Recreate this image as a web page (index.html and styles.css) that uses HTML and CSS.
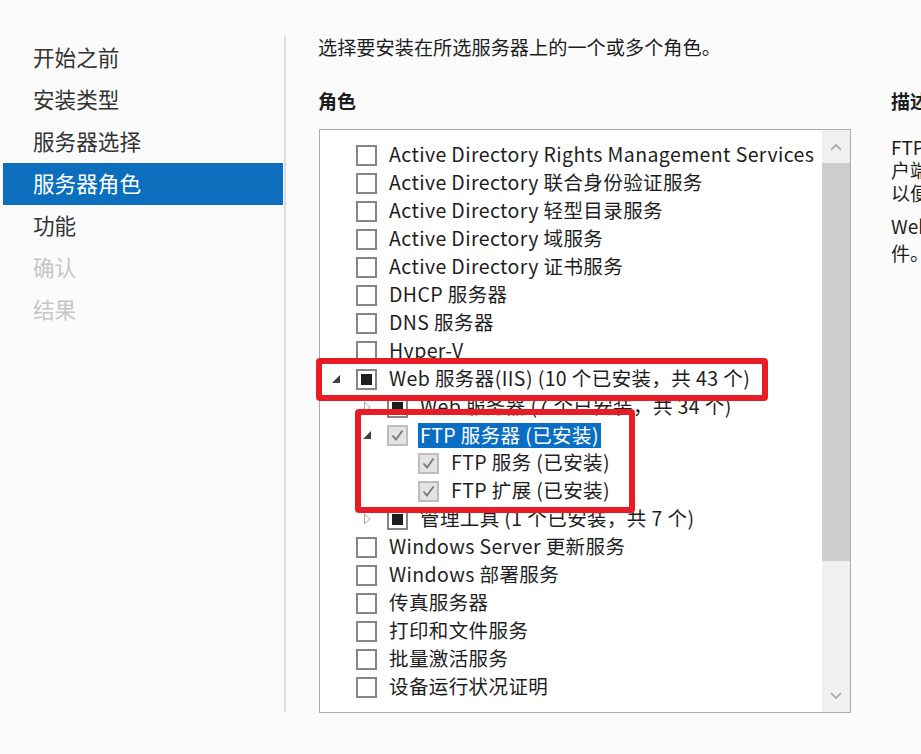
FILE: index.html
```html
<!DOCTYPE html>
<html lang="zh-CN">
<head>
<meta charset="UTF-8">
<meta name="viewport" content="width=device-width, initial-scale=1.0">
<title>添加角色和功能向导 - 服务器角色</title>
<link rel="stylesheet" href="styles.css">
</head>
<body>
<div class="window">
  <div class="wizard">
    <nav class="steps">
      <div class="step">开始之前</div>
      <div class="step">安装类型</div>
      <div class="step">服务器选择</div>
      <div class="step active">服务器角色</div>
      <div class="step">功能</div>
      <div class="step disabled">确认</div>
      <div class="step disabled">结果</div>
    </nav>
    <div class="divider"></div>

    <main class="content">
      <p class="intro">选择要安装在所选服务器上的一个或多个角色。</p>
      <div class="columns">
        <section class="roles">
          <h3>角色</h3>
          <div class="listbox">
            <ul class="tree">
              <li class="row lvl0"><span class="exp"></span><span class="cb"></span><span class="label">Active Directory Rights Management Services</span></li>
              <li class="row lvl0"><span class="exp"></span><span class="cb"></span><span class="label">Active Directory 联合身份验证服务</span></li>
              <li class="row lvl0"><span class="exp"></span><span class="cb"></span><span class="label">Active Directory 轻型目录服务</span></li>
              <li class="row lvl0"><span class="exp"></span><span class="cb"></span><span class="label">Active Directory 域服务</span></li>
              <li class="row lvl0"><span class="exp"></span><span class="cb"></span><span class="label">Active Directory 证书服务</span></li>
              <li class="row lvl0"><span class="exp"></span><span class="cb"></span><span class="label">DHCP 服务器</span></li>
              <li class="row lvl0"><span class="exp"></span><span class="cb"></span><span class="label">DNS 服务器</span></li>
              <li class="row lvl0"><span class="exp"></span><span class="cb"></span><span class="label">Hyper-V</span></li>
              <li class="row lvl0">
                <span class="exp"><svg width="10" height="10" viewBox="0 0 10 10"><polygon points="9,1 9,9 1,9" fill="#404040"/></svg></span>
                <span class="cb partial"></span><span class="label">Web 服务器(IIS) (10 个已安装，共 43 个)</span>
              </li>
              <li class="row lvl1">
                <span class="exp"><svg width="10" height="12" viewBox="0 0 10 12"><polygon points="2.5,1 8,6 2.5,11" fill="none" stroke="#a8a8a8"/></svg></span>
                <span class="cb partial"></span><span class="label">Web 服务器 (7 个已安装，共 34 个)</span>
              </li>
              <li class="row lvl1">
                <span class="exp"><svg width="10" height="10" viewBox="0 0 10 10"><polygon points="9,1 9,9 1,9" fill="#404040"/></svg></span>
                <span class="cb checked"><svg width="17" height="17" viewBox="0 0 17 17"><polyline points="3.5,8.5 7,12.5 13.5,3.5" fill="none" stroke="#777" stroke-width="1.8"/></svg></span>
                <span class="label selected">FTP 服务器 (已安装)</span>
              </li>
              <li class="row lvl2"><span class="exp"></span>
                <span class="cb checked"><svg width="17" height="17" viewBox="0 0 17 17"><polyline points="3.5,8.5 7,12.5 13.5,3.5" fill="none" stroke="#777" stroke-width="1.8"/></svg></span>
                <span class="label">FTP 服务 (已安装)</span>
              </li>
              <li class="row lvl2"><span class="exp"></span>
                <span class="cb checked"><svg width="17" height="17" viewBox="0 0 17 17"><polyline points="3.5,8.5 7,12.5 13.5,3.5" fill="none" stroke="#777" stroke-width="1.8"/></svg></span>
                <span class="label">FTP 扩展 (已安装)</span>
              </li>
              <li class="row lvl1">
                <span class="exp"><svg width="10" height="12" viewBox="0 0 10 12"><polygon points="2.5,1 8,6 2.5,11" fill="none" stroke="#a8a8a8"/></svg></span>
                <span class="cb partial"></span><span class="label">管理工具 (1 个已安装，共 7 个)</span>
              </li>
              <li class="row lvl0"><span class="exp"></span><span class="cb"></span><span class="label">Windows Server 更新服务</span></li>
              <li class="row lvl0"><span class="exp"></span><span class="cb"></span><span class="label">Windows 部署服务</span></li>
              <li class="row lvl0"><span class="exp"></span><span class="cb"></span><span class="label">传真服务器</span></li>
              <li class="row lvl0"><span class="exp"></span><span class="cb"></span><span class="label">打印和文件服务</span></li>
              <li class="row lvl0"><span class="exp"></span><span class="cb"></span><span class="label">批量激活服务</span></li>
              <li class="row lvl0"><span class="exp"></span><span class="cb"></span><span class="label">设备运行状况证明</span></li>
            </ul>

            <div class="scrollbar">
              <div class="arrow">
                <svg width="12" height="8" viewBox="0 0 12 8"><polyline points="1,7 6,2 11,7" fill="none" stroke="#a6a6a6" stroke-width="1.6"/></svg>
              </div>
              <div class="thumb"></div>
              <div class="track"></div>
              <div class="arrow">
                <svg width="12" height="8" viewBox="0 0 12 8"><polyline points="1,1 6,6 11,1" fill="none" stroke="#a6a6a6" stroke-width="1.6"/></svg>
              </div>
            </div>

            <!-- red annotation frames drawn over the list -->
            <div class="mark mark-iis"></div>
            <div class="mark mark-ftp"></div>
          </div>
        </section>

        <section class="desc">
          <h3>描述</h3>
          <div class="desc-text">
            <div class="line">FTP 服务器使服务器能够接收来自客</div>
            <div class="line">户端的文件传输请求，并设置站点，</div>
            <div class="line">以便用户可以上传和下载文件。也可</div>
            <div class="line tall">Web 站点中发布 FTP 内容和托管文</div>
            <div class="line">件。</div>
          </div>
        </section>
      </div>
    </main>
  </div>
  <div class="footer"></div>
</div>
</body>
</html>
```

FILE: styles.css
```css
html,
body {
  margin: 0;
  height: 100%;
}

body {
  font-family: "Noto Sans CJK SC", "Noto Sans", sans-serif;
  background-color: #fbfbfb;
  color: #1e1e1e;
  overflow: hidden;
}

.window {
  width: 921px;
  height: 754px;
  display: flex;
  flex-direction: column;
}

.wizard {
  flex: 1;
  display: flex;
  min-height: 0;
}

/* left step list */
.steps {
  width: 280px;
  margin-left: 3px;
  padding-top: 37px;
  flex-shrink: 0;
}

.step {
  height: 42px;
  line-height: 40px;
  padding-bottom: 2px;
  box-sizing: border-box;
  padding-left: 30px;
  font-size: 21.6px;
  color: #333;
}

.step.active {
  background-color: #0b6fbd;
  color: #fff;
}

.step.disabled {
  color: #c6c6c6;
}

.divider {
  width: 2px;
  margin-left: 1px;
  margin-top: 36px;
  height: 676px;
  background-color: #dcdcdc;
  flex-shrink: 0;
}

/* main area */
.content {
  padding-left: 32px;
  flex: 1;
  min-width: 0;
}

.intro {
  margin: 34px 0 0;
  font-size: 19.2px;
  line-height: 26px;
}

.columns {
  display: flex;
  margin-top: 28px;
}

h3 {
  margin: 0;
  font-size: 19px;
  line-height: 26px;
  font-weight: bold;
}

.roles {
  width: 533px;
  flex-shrink: 0;
}

.listbox {
  position: relative;
  margin: 15px 0 0 1px;
  width: 532px;
  height: 584px;
  box-sizing: border-box;
  border: 1px solid #acacac;
  background-color: #fff;
  display: flex;
}

.tree {
  list-style: none;
  margin: 0;
  padding: 11px 0 0;
  flex: 1;
  min-width: 0;
  overflow: hidden;
}

.row {
  display: flex;
  align-items: center;
  height: 28px;
  font-size: 19.5px;
  letter-spacing: 0.4px;
  white-space: nowrap;
}

.lvl0 { padding-left: 6px; }
.lvl1 { padding-left: 37px; }
.lvl2 { padding-left: 68px; }

.exp {
  width: 20px;
  height: 20px;
  display: flex;
  align-items: center;
  justify-content: center;
  flex-shrink: 0;
}

.cb {
  width: 21px;
  height: 21px;
  box-sizing: border-box;
  margin-left: 10px;
  border: 2px solid #858585;
  background-color: #fff;
  display: flex;
  align-items: center;
  justify-content: center;
  flex-shrink: 0;
}

.cb.partial::after {
  content: "";
  width: 11px;
  height: 11px;
  background-color: #1e1e1e;
}

.cb.checked {
  border-color: #bdbdbd;
  background-color: #e3e3e3;
}

.label {
  margin-left: 12px;
  line-height: 26px;
  padding-bottom: 2px;
}

.label.selected {
  margin-left: 10px;
  padding: 0 2px 1px;
  line-height: 24px;
  background-color: #0a6fc4;
  color: #fff;
}

/* scroll bar */
.scrollbar {
  width: 28px;
  flex-shrink: 0;
  display: flex;
  flex-direction: column;
  background-color: #f0f0f0;
}

.arrow {
  height: 33px;
  display: flex;
  align-items: center;
  justify-content: center;
}

.thumb {
  height: 398px;
  background-color: #cdcdcd;
}

.track {
  flex: 1;
}

/* annotation frames */
.mark {
  position: absolute;
  box-sizing: border-box;
  border: 6px solid #e81c25;
  border-radius: 4px;
}

.mark-iis {
  left: -4px;
  top: 228px;
  width: 452px;
  height: 43px;
}

.mark-ftp {
  left: 35px;
  top: 279px;
  width: 280px;
  height: 104px;
}

/* description column */
.desc {
  margin-left: 40px;
  flex-shrink: 0;
  width: 340px;
}

.desc-text {
  margin-top: 21px;
  font-size: 19px;
  white-space: nowrap;
}

.line {
  line-height: 23px;
}

.line.tall {
  line-height: 31px;
  padding-top: 6px;
}
```
